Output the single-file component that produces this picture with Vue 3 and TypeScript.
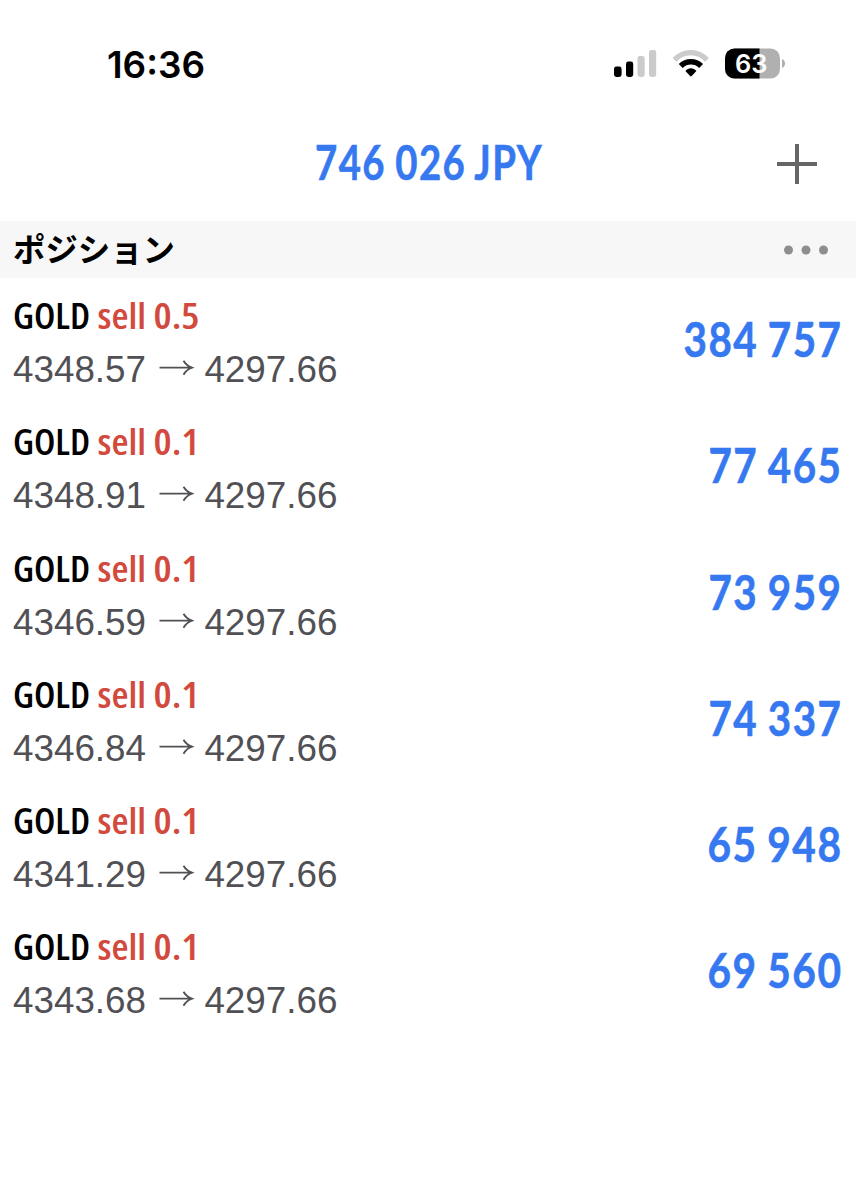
<script setup lang="ts">
interface Position {
  symbol: string
  volume: string
  open: string
  current: string
  profit: string
  width: number
}

const positions: Position[] = [
  { symbol: 'GOLD', volume: '0.5', open: '4348.57', current: '4297.66', profit: '384 757', width: 159 },
  { symbol: 'GOLD', volume: '0.1', open: '4348.91', current: '4297.66', profit: '77 465', width: 134 },
  { symbol: 'GOLD', volume: '0.1', open: '4346.59', current: '4297.66', profit: '73 959', width: 134 },
  { symbol: 'GOLD', volume: '0.1', open: '4346.84', current: '4297.66', profit: '74 337', width: 134 },
  { symbol: 'GOLD', volume: '0.1', open: '4341.29', current: '4297.66', profit: '65 948', width: 135 },
  { symbol: 'GOLD', volume: '0.1', open: '4343.68', current: '4297.66', profit: '69 560', width: 135 },
]
</script>

<template>
  <main class="screen">
    <header class="status">
      <svg class="clock" width="110" height="44" viewBox="0 0 110 44">
        <text class="time" x="2" y="35" textLength="98" lengthAdjust="spacingAndGlyphs">16:36</text>
      </svg>
      <svg class="indicators" width="200" height="56" viewBox="0 0 200 56">
        <rect x="14" y="30.5" width="7.6" height="10.5" rx="2.4" />
        <rect x="26" y="25.5" width="7.2" height="15.5" rx="2.4" />
        <rect class="dim" x="37.5" y="20" width="7.2" height="21" rx="2.4" />
        <rect class="dim" x="49" y="14" width="7.2" height="27" rx="2.4" />
        <path class="wave dim-wave" d="M74.5 23.8 C84 14.2 97.5 14.2 107 23.8" />
        <path class="wave" d="M80.7 30 C86.4 24.3 95.4 24.3 101.1 30" />
        <path d="M85.4 34.9 C88.6 31.4 93.2 31.4 96.4 34.9 L91.7 40 Q90.9 40.9 90.1 40 Z" />
        <clipPath id="charge"><rect x="125" y="12" width="34.5" height="31" /></clipPath>
        <rect class="spent" x="125" y="12.5" width="55" height="30" rx="9.5" />
        <rect x="125" y="12.5" width="55" height="30" rx="9.5" clip-path="url(#charge)" />
        <path class="spent" d="M182 23 C186 24.5 186 30.5 182 32 Z" />
        <text class="level" x="135" y="37" textLength="32.5" lengthAdjust="spacingAndGlyphs">63</text>
      </svg>
    </header>

    <section class="summary">
      <svg class="balance" width="230" height="60" viewBox="0 0 230 60">
        <text class="amount" x="2" y="44.3" font-size="47.5" textLength="228" lengthAdjust="spacingAndGlyphs">746 026 JPY</text>
      </svg>
      <svg class="add" width="40" height="40" viewBox="0 0 40 40">
        <path d="M0 20H40M20 0V40" />
      </svg>
    </section>

    <section class="heading">
      <h2>ポジション</h2>
      <svg width="46" height="10" viewBox="0 0 46 10">
        <circle cx="5.5" cy="5" r="4.5" />
        <circle cx="23" cy="5" r="4.5" />
        <circle cx="40.5" cy="5" r="4.5" />
      </svg>
    </section>

    <ul class="positions">
      <li v-for="(p, i) in positions" :key="i">
        <svg class="details" width="340" height="126" viewBox="0 0 340 126">
          <text class="name" x="13" y="51" textLength="77" lengthAdjust="spacingAndGlyphs">{{ p.symbol }}</text>
          <text class="name side" x="97.5" y="51" textLength="48.5" lengthAdjust="spacingAndGlyphs">sell</text>
          <text class="name side" x="153.5" y="51" textLength="46" lengthAdjust="spacingAndGlyphs">{{ p.volume }}</text>
          <text class="price" x="13" y="103.5">{{ p.open }}</text>
          <path class="arrow" d="M159.5 89.7H191M183.5 82.7Q186.5 87.7 192 89.7Q186.5 91.7 183.5 96.7" />
          <text class="price" x="204.4" y="103.5">{{ p.current }}</text>
        </svg>
        <svg class="profit" width="256" height="126" viewBox="0 0 256 126">
          <text class="amount" x="242.5" y="79.3" font-size="48.5" text-anchor="end" :textLength="p.width" lengthAdjust="spacingAndGlyphs">{{ p.profit }}</text>
        </svg>
      </li>
    </ul>
  </main>
</template>

<style>
body { background: #fff; }
</style>

<style scoped>
.screen {
  width: 856px;
  height: 1200px;
  overflow: hidden;
  background: #fff;
  color: #000;
}
svg { display: block; flex: none; overflow: visible; }
.status {
  display: flex;
  justify-content: space-between;
  align-items: flex-start;
  height: 94px;
  box-sizing: border-box;
  padding: 36px 56px 0 105px;
}
.clock { margin-top: 7px; }
.time { font: 600 37px Inter, sans-serif; }
.level { font: 600 26px Inter, sans-serif; fill: #fff; }
.dim { fill: #cbcbcb; }
.spent { fill: #b0b0b0; }
.wave { fill: none; stroke: #000; stroke-width: 5.4; }
.dim-wave { stroke: #cbcbcb; }
.summary {
  display: grid;
  grid-template-columns: 1fr 230px 1fr;
  align-items: start;
  height: 127px;
  box-sizing: border-box;
  padding: 42px 39px 0 39px;
}
.balance { grid-column: 2; }
.add {
  justify-self: end;
  margin-top: 8px;
  stroke: #666;
  stroke-width: 4;
}
.amount {
  font-family: Lato, sans-serif;
  font-weight: 700;
  letter-spacing: 1.8px;
  word-spacing: -2px;
  fill: #3578f0;
  stroke: #3578f0;
  stroke-width: 0.6;
}
.heading {
  display: flex;
  align-items: flex-start;
  justify-content: space-between;
  height: 57px;
  box-sizing: border-box;
  padding: 0 27px 0 13px;
  background: #f7f7f7;
}
.heading svg { margin-top: 24px; }
.heading h2 {
  margin: 0;
  font: 700 32.4px/53px "Noto Sans CJK JP", sans-serif;
}
.heading circle { fill: #8e8e8e; }
.positions { margin: 0; padding: 0; list-style: none; }
.positions li {
  display: flex;
  justify-content: space-between;
  height: 126.3px;
}
.name {
  font: 650 36.5px "Open Sans", sans-serif;
  font-stretch: 75%;
}
.side { fill: #d24a3d; }
.price { font: 36.8px "Liberation Sans", Arial, sans-serif; fill: #505055; }
.arrow { fill: none; stroke: #505055; stroke-width: 1.8; }
</style>
